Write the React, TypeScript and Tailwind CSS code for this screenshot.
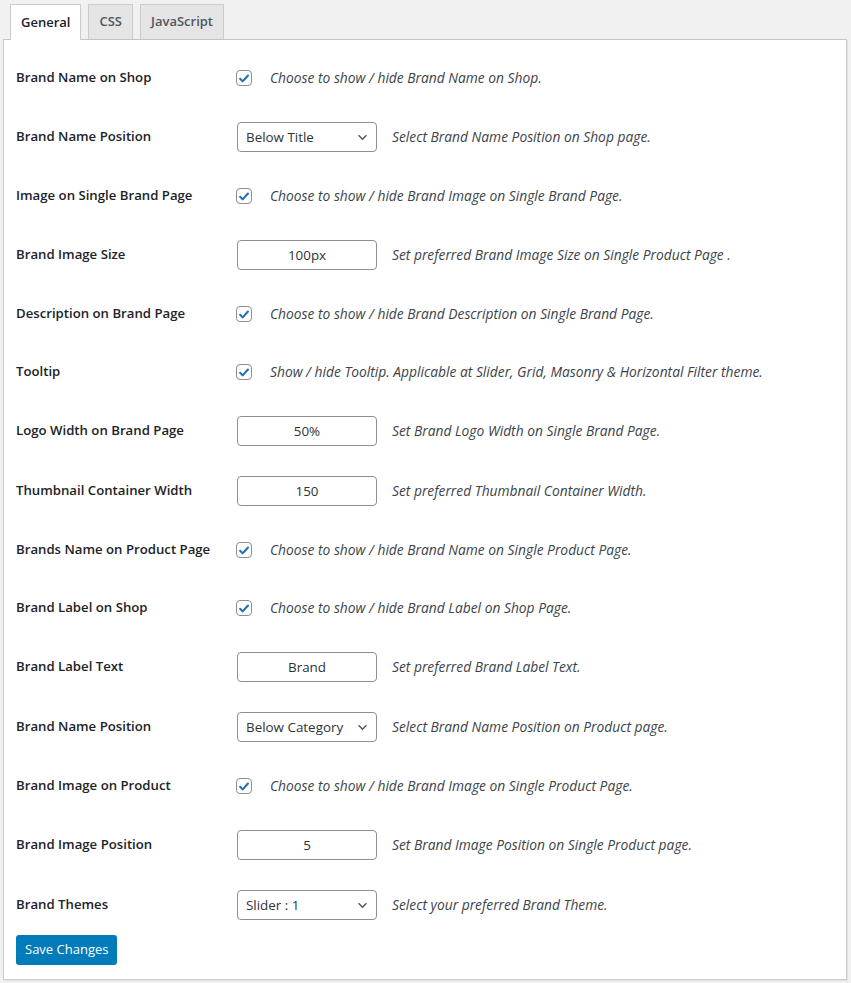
import { useState } from "react";

type Row =
  | { label: string; kind: "check"; desc: string }
  | { label: string; kind: "input"; value: string; desc: string }
  | { label: string; kind: "select"; value: string; options: string[]; desc: string };

const rows: Row[] = [
  { label: "Brand Name on Shop", kind: "check", desc: "Choose to show / hide Brand Name on Shop." },
  {
    label: "Brand Name Position",
    kind: "select",
    value: "Below Title",
    options: ["Below Title", "Above Title"],
    desc: "Select Brand Name Position on Shop page.",
  },
  { label: "Image on Single Brand Page", kind: "check", desc: "Choose to show / hide Brand Image on Single Brand Page." },
  { label: "Brand Image Size", kind: "input", value: "100px", desc: "Set preferred Brand Image Size on Single Product Page ." },
  { label: "Description on Brand Page", kind: "check", desc: "Choose to show / hide Brand Description on Single Brand Page." },
  {
    label: "Tooltip",
    kind: "check",
    desc: "Show / hide Tooltip. Applicable at Slider, Grid, Masonry & Horizontal Filter theme.",
  },
  { label: "Logo Width on Brand Page", kind: "input", value: "50%", desc: "Set Brand Logo Width on Single Brand Page." },
  { label: "Thumbnail Container Width", kind: "input", value: "150", desc: "Set preferred Thumbnail Container Width." },
  { label: "Brands Name on Product Page", kind: "check", desc: "Choose to show / hide Brand Name on Single Product Page." },
  { label: "Brand Label on Shop", kind: "check", desc: "Choose to show / hide Brand Label on Shop Page." },
  { label: "Brand Label Text", kind: "input", value: "Brand", desc: "Set preferred Brand Label Text." },
  {
    label: "Brand Name Position",
    kind: "select",
    value: "Below Category",
    options: ["Below Category", "Above Category"],
    desc: "Select Brand Name Position on Product page.",
  },
  { label: "Brand Image on Product", kind: "check", desc: "Choose to show / hide Brand Image on Single Product Page." },
  { label: "Brand Image Position", kind: "input", value: "5", desc: "Set Brand Image Position on Single Product page." },
  {
    label: "Brand Themes",
    kind: "select",
    value: "Slider : 1",
    options: ["Slider : 1", "Slider : 2", "Grid : 1"],
    desc: "Select your preferred Brand Theme.",
  },
];

function CheckBox() {
  return (
    <span className="flex h-4 w-4 items-center justify-center rounded-[4px] border border-[#8c8f94] bg-white">
      <svg viewBox="0 0 20 20" className="h-[15px] w-[15px]">
        <path d="M4.5 10.5l3.6 3.6 7.6-8.4" fill="none" stroke="#2271b1" strokeWidth="3" strokeLinecap="round" strokeLinejoin="round" />
      </svg>
    </span>
  );
}

function Chevron() {
  return (
    <svg viewBox="0 0 12 8" className="h-[7px] w-[11px]">
      <path d="M1.5 1.5l4.5 4.5 4.5-4.5" fill="none" stroke="#50575e" strokeWidth="1.6" />
    </svg>
  );
}

function Control({ row }: { row: Row }) {
  if (row.kind === "check") {
    return (
      <div className="flex items-center">
        <CheckBox />
        <span className="ml-[18px] text-[13.8px] italic text-[#3c434a]">{row.desc}</span>
      </div>
    );
  }
  return (
    <div className="flex items-center pl-px">
      {row.kind === "input" ? (
        <div className="flex h-[30px] w-[140px] items-center justify-center rounded-[4px] border border-[#8c8f94] bg-white text-[13.4px] text-[#2c3338]">
          {row.value}
        </div>
      ) : (
        <div className="flex h-[30px] w-[140px] items-center justify-between rounded-[4px] border border-[#8c8f94] bg-white pl-2 pr-2 text-[13.4px] text-[#2c3338]">
          <span>{row.value}</span>
          <Chevron />
        </div>
      )}
      <span className="ml-[15px] text-[13.8px] italic text-[#3c434a]">{row.desc}</span>
    </div>
  );
}

export default function App() {
  const [tab, setTab] = useState("General");
  const tabs = ["General", "CSS", "JavaScript"];

  return (
    <div className="min-h-[983px] bg-[#f1f1f1] pt-1 font-['Open_Sans',sans-serif]">
      <div className="flex gap-[7px] pl-[10px]">
        {tabs.map((t) => (
          <button
            key={t}
            onClick={() => setTab(t)}
            className={
              t === tab
                ? "relative -mb-px h-[36px] border border-b-0 border-[#ccc] bg-white px-[10px] text-[13px] font-semibold text-[#1d2327]"
                : "h-[35px] border border-b-0 border-[#ccc] bg-[#e5e5e5] px-[10px] text-[13px] font-semibold text-[#50575e]"
            }
          >
            {t}
          </button>
        ))}
      </div>
      <div className="mx-[3px] w-[844px] border border-[#ccc] border-t-[#c3c4c7] bg-white pb-[14px] pl-[12px] pt-[9px] shadow-[1px_1px_1px_rgba(0,0,0,0.06)]">
        {rows.map((row, i) => (
          <div
            key={i}
            className={`flex items-center ${row.kind === "check" ? "h-[58px]" : "h-[60px]"}`}
          >
            <div className="w-[220px] text-[13.2px] font-semibold text-[#1d2327]">{row.label}</div>
            <Control row={row} />
          </div>
        ))}
        <button className="h-[30px] rounded-[3px] bg-[#007cba] px-[9px] text-[13px] text-white">Save Changes</button>
      </div>
    </div>
  );
}
